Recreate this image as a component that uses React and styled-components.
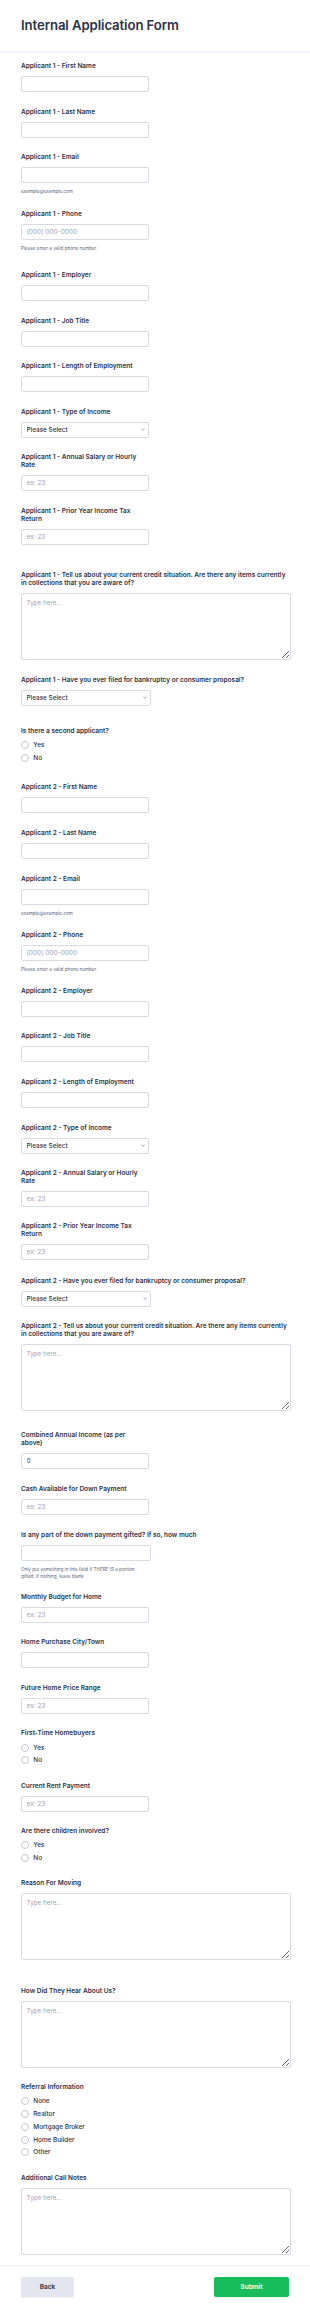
import React from 'react'
import styled, { createGlobalStyle } from 'styled-components'

const GlobalStyle = createGlobalStyle`
  html, body { margin: 0; padding: 0; background: #fff; }
  body { font-family: Inter, "Noto Sans", sans-serif; color: #2c3345; }
  * { box-sizing: border-box; }
`

const fields = [
  { type: 'input', label: 'Applicant 1 - First Name', mt: 9 },
  { type: 'input', label: 'Applicant 1 - Last Name' },
  { type: 'input', label: 'Applicant 1 - Email', mt: 15, sub: 'example@example.com' },
  { type: 'input', label: 'Applicant 1 - Phone', mt: 15, placeholder: '(000) 000-0000', sub: 'Please enter a valid phone number.' },
  { type: 'input', label: 'Applicant 1 - Employer', mt: 19 },
  { type: 'input', label: 'Applicant 1 - Job Title' },
  { type: 'input', label: 'Applicant 1 - Length of Employment', mt: 15 },
  { type: 'select', label: 'Applicant 1 - Type of Income' },
  { type: 'input', label: 'Applicant 1 - Annual Salary or Hourly Rate', mt: 15, placeholder: 'ex: 23', narrow: true },
  { type: 'input', label: 'Applicant 1 - Prior Year Income Tax Return', placeholder: 'ex: 23', narrow: true },
  { type: 'textarea', label: 'Applicant 1 - Tell us about your current credit situation. Are there any items currently in collections that you are aware of?', mt: 26 },
  { type: 'select', label: 'Applicant 1 - Have you ever filed for bankruptcy or consumer proposal?', wide: true },
  { type: 'radio', label: 'Is there a second applicant?', mt: 21, options: ['Yes', 'No'] },
  { type: 'input', label: 'Applicant 2 - First Name', mt: 19 },
  { type: 'input', label: 'Applicant 2 - Last Name' },
  { type: 'input', label: 'Applicant 2 - Email', sub: 'example@example.com' },
  { type: 'input', label: 'Applicant 2 - Phone', mt: 14, placeholder: '(000) 000-0000', sub: 'Please enter a valid phone number.' },
  { type: 'input', label: 'Applicant 2 - Employer', mt: 14 },
  { type: 'input', label: 'Applicant 2 - Job Title', mt: 15 },
  { type: 'input', label: 'Applicant 2 - Length of Employment' },
  { type: 'select', label: 'Applicant 2 - Type of Income' },
  { type: 'input', label: 'Applicant 2 - Annual Salary or Hourly Rate', mt: 15, placeholder: 'ex: 23', narrow: true },
  { type: 'input', label: 'Applicant 2 - Prior Year Income Tax Return', mt: 15, placeholder: 'ex: 23', narrow: true },
  { type: 'select', label: 'Applicant 2 - Have you ever filed for bankruptcy or consumer proposal?', mt: 17, wide: true },
  { type: 'textarea', label: 'Applicant 2 - Tell us about your current credit situation. Are there any items currently in collections that you are aware of?', mt: 15 },
  { type: 'input', label: 'Combined Annual Income (as per above)', mt: 20, value: '0', narrow: true },
  { type: 'input', label: 'Cash Available for Down Payment', placeholder: 'ex: 23' },
  { type: 'input', label: 'Is any part of the down payment gifted? If so, how much', wide: true, sub: 'Only put something in this field if THERE IS a portion gifted. If nothing, leave blank' },
  { type: 'input', label: 'Monthly Budget for Home', mt: 13, placeholder: 'ex: 23' },
  { type: 'input', label: 'Home Purchase City/Town', mt: 15 },
  { type: 'input', label: 'Future Home Price Range', placeholder: 'ex: 23' },
  { type: 'radio', label: 'First-Time Homebuyers', mt: 15, options: ['Yes', 'No'] },
  { type: 'input', label: 'Current Rent Payment', mt: 15, placeholder: 'ex: 23' },
  { type: 'radio', label: 'Are there children involved?', mt: 15, options: ['Yes', 'No'] },
  { type: 'textarea', label: 'Reason For Moving', mt: 15 },
  { type: 'textarea', label: 'How Did They Hear About Us?', mt: 27 },
  { type: 'radio', label: 'Referral Information', mt: 15, options: ['None', 'Realtor', 'Mortgage Broker', 'Home Builder', 'Other'] },
  { type: 'textarea', label: 'Additional Call Notes', mt: 15 },
]

function Chevron() {
  return (
    <svg width="4" height="3" viewBox="0 0 8 5" fill="none">
      <path d="M1 1l3 3 3-3" stroke="#6f768a" strokeWidth="1.3" strokeLinecap="round" strokeLinejoin="round" />
    </svg>
  )
}

function FieldBlock({ f }) {
  return (
    <Field $mt={f.mt ?? 16}>
      <Label $narrow={f.narrow} $radio={f.type === 'radio'}>{f.label}</Label>
      {f.type === 'input' && (
        <TextInput $wide={f.wide} placeholder={f.placeholder} defaultValue={f.value} />
      )}
      {f.type === 'select' && (
        <SelectWrap $wide={f.wide}>
          <SelectBox defaultValue="">
            <option value="">Please Select</option>
          </SelectBox>
          <ChevronSpot><Chevron /></ChevronSpot>
        </SelectWrap>
      )}
      {f.type === 'textarea' && <TextArea placeholder="Type here..." />}
      {f.type === 'radio' && (
        <RadioList>
          {f.options.map((o) => (
            <RadioRow key={o}>
              <Circle />
              <RadioText>{o}</RadioText>
            </RadioRow>
          ))}
        </RadioList>
      )}
      {f.sub && <Sub>{f.sub}</Sub>}
    </Field>
  )
}

export default function App() {
  return (
    <Page>
      <GlobalStyle />
      <Header>
        <Title>Internal Application Form</Title>
      </Header>
      <Form>
        {fields.map((f) => <FieldBlock key={f.label} f={f} />)}
      </Form>
      <Footer>
        <BackButton>Back</BackButton>
        <SubmitButton>Submit</SubmitButton>
      </Footer>
    </Page>
  )
}

const Page = styled.div`
  width: 310px;
  background: #fff;
`

const Header = styled.div`
  height: 53px;
  padding: 0 21px 2px 21px;
  display: flex;
  align-items: center;
  border-bottom: 2px solid #f3f3f7;
`

const Title = styled.h1`
  margin: 0;
  font-size: 13.2px;
  font-weight: 600;
  color: #2c3345;
  letter-spacing: -0.1px;
`

const Form = styled.div`
  padding: 0 19px 10px 21px;
`

const Field = styled.div`
  margin-top: ${(p) => p.$mt}px;
`

const Label = styled.div`
  font-size: 6.5px;
  line-height: 8px;
  font-weight: 600;
  color: #2c3345;
  margin-bottom: ${(p) => (p.$radio ? 4 : 6)}px;
  max-width: ${(p) => (p.$narrow ? '122px' : '270px')};
`

const TextInput = styled.input`
  display: block;
  width: ${(p) => (p.$wide ? '129.5px' : '127.5px')};
  height: 16px;
  border: 1px solid #d8dbe4;
  border-radius: 2px;
  padding: 0 4.5px;
  font-family: inherit;
  font-size: 6.5px;
  color: #2c3345;
  background: #fff;
  outline: none;
  &::placeholder { color: #9ba1b2; }
`

const SelectWrap = styled.div`
  position: relative;
  width: ${(p) => (p.$wide ? '129.5px' : '127.5px')};
`

const SelectBox = styled.select`
  display: block;
  width: 100%;
  height: 16px;
  appearance: none;
  border: 1px solid #d8dbe4;
  border-radius: 2px;
  padding: 0 4.5px;
  font-family: inherit;
  font-size: 6.4px;
  font-weight: 500;
  color: #2c3345;
  background: #fff;
  outline: none;
`

const ChevronSpot = styled.span`
  position: absolute;
  right: 4px;
  top: 6px;
  display: flex;
  pointer-events: none;
`

const TextArea = styled.textarea`
  display: block;
  width: 270px;
  height: 67px;
  border: 1px solid #d8dbe4;
  border-radius: 2px;
  padding: 5px 4.5px;
  font-family: inherit;
  font-size: 6.3px;
  color: #2c3345;
  resize: vertical;
  outline: none;
  &::placeholder { color: #9ba1b2; }
`

const Sub = styled.div`
  margin-top: 5px;
  font-size: 4.6px;
  line-height: 7px;
  color: #57647e;
  max-width: 128px;
`

const RadioList = styled.div`
  display: flex;
  flex-direction: column;
`

const RadioRow = styled.div`
  display: flex;
  align-items: center;
  height: 12.7px;
  gap: 4.3px;
`

const Circle = styled.span`
  width: 8px;
  height: 8px;
  border-radius: 50%;
  border: 1px solid #c4c8d4;
  background: #fff;
  flex: none;
`

const RadioText = styled.span`
  font-size: 6.4px;
  font-weight: 500;
  color: #2c3345;
`

const Footer = styled.div`
  border-top: 2px solid #f3f3f7;
  padding: 10px 21px 11px 21px;
  display: flex;
  justify-content: space-between;
  align-items: center;
`

const ButtonBase = styled.button`
  height: 20px;
  border: none;
  border-radius: 2px;
  font-family: inherit;
  font-size: 6.5px;
  font-weight: 600;
  cursor: pointer;
  box-shadow: 0 1px 1px rgba(0, 0, 0, 0.06);
`

const BackButton = styled(ButtonBase)`
  width: 53px;
  background: #e3e5ef;
  color: #2c3345;
`

const SubmitButton = styled(ButtonBase)`
  width: 75px;
  background: #18bd5b;
  color: #fff;
`
